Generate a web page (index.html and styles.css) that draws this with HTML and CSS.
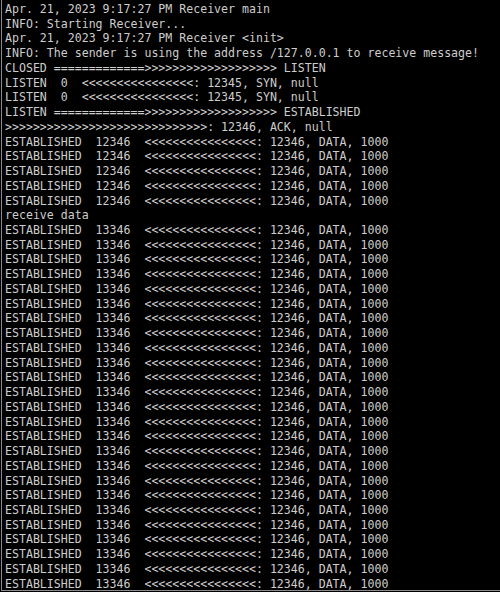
FILE: index.html
```html
<!DOCTYPE html>
<html>
<head>
<meta charset="utf-8">
<link rel="stylesheet" href="styles.css">
</head>
<body>
<div class="frame">
<pre class="console">Apr. 21, 2023 9:17:27 PM Receiver main
INFO: Starting Receiver...
Apr. 21, 2023 9:17:27 PM Receiver &lt;init&gt;
INFO: The sender is using the address /127.0.0.1 to receive message!
CLOSED =============&gt;&gt;&gt;&gt;&gt;&gt;&gt;&gt;&gt;&gt;&gt;&gt;&gt;&gt;&gt;&gt;&gt;&gt;&gt; LISTEN
LISTEN  0  &lt;&lt;&lt;&lt;&lt;&lt;&lt;&lt;&lt;&lt;&lt;&lt;&lt;&lt;&lt;&lt;: 12345, SYN, null
LISTEN  0  &lt;&lt;&lt;&lt;&lt;&lt;&lt;&lt;&lt;&lt;&lt;&lt;&lt;&lt;&lt;&lt;: 12345, SYN, null
LISTEN =============&gt;&gt;&gt;&gt;&gt;&gt;&gt;&gt;&gt;&gt;&gt;&gt;&gt;&gt;&gt;&gt;&gt;&gt;&gt; ESTABLISHED
&gt;&gt;&gt;&gt;&gt;&gt;&gt;&gt;&gt;&gt;&gt;&gt;&gt;&gt;&gt;&gt;&gt;&gt;&gt;&gt;&gt;&gt;&gt;&gt;&gt;&gt;&gt;&gt;&gt;: 12346, ACK, null
ESTABLISHED  12346  &lt;&lt;&lt;&lt;&lt;&lt;&lt;&lt;&lt;&lt;&lt;&lt;&lt;&lt;&lt;&lt;: 12346, DATA, 1000
ESTABLISHED  12346  &lt;&lt;&lt;&lt;&lt;&lt;&lt;&lt;&lt;&lt;&lt;&lt;&lt;&lt;&lt;&lt;: 12346, DATA, 1000
ESTABLISHED  12346  &lt;&lt;&lt;&lt;&lt;&lt;&lt;&lt;&lt;&lt;&lt;&lt;&lt;&lt;&lt;&lt;: 12346, DATA, 1000
ESTABLISHED  12346  &lt;&lt;&lt;&lt;&lt;&lt;&lt;&lt;&lt;&lt;&lt;&lt;&lt;&lt;&lt;&lt;: 12346, DATA, 1000
ESTABLISHED  12346  &lt;&lt;&lt;&lt;&lt;&lt;&lt;&lt;&lt;&lt;&lt;&lt;&lt;&lt;&lt;&lt;: 12346, DATA, 1000
receive data
ESTABLISHED  13346  &lt;&lt;&lt;&lt;&lt;&lt;&lt;&lt;&lt;&lt;&lt;&lt;&lt;&lt;&lt;&lt;: 12346, DATA, 1000
ESTABLISHED  13346  &lt;&lt;&lt;&lt;&lt;&lt;&lt;&lt;&lt;&lt;&lt;&lt;&lt;&lt;&lt;&lt;: 12346, DATA, 1000
ESTABLISHED  13346  &lt;&lt;&lt;&lt;&lt;&lt;&lt;&lt;&lt;&lt;&lt;&lt;&lt;&lt;&lt;&lt;: 12346, DATA, 1000
ESTABLISHED  13346  &lt;&lt;&lt;&lt;&lt;&lt;&lt;&lt;&lt;&lt;&lt;&lt;&lt;&lt;&lt;&lt;: 12346, DATA, 1000
ESTABLISHED  13346  &lt;&lt;&lt;&lt;&lt;&lt;&lt;&lt;&lt;&lt;&lt;&lt;&lt;&lt;&lt;&lt;: 12346, DATA, 1000
ESTABLISHED  13346  &lt;&lt;&lt;&lt;&lt;&lt;&lt;&lt;&lt;&lt;&lt;&lt;&lt;&lt;&lt;&lt;: 12346, DATA, 1000
ESTABLISHED  13346  &lt;&lt;&lt;&lt;&lt;&lt;&lt;&lt;&lt;&lt;&lt;&lt;&lt;&lt;&lt;&lt;: 12346, DATA, 1000
ESTABLISHED  13346  &lt;&lt;&lt;&lt;&lt;&lt;&lt;&lt;&lt;&lt;&lt;&lt;&lt;&lt;&lt;&lt;: 12346, DATA, 1000
ESTABLISHED  13346  &lt;&lt;&lt;&lt;&lt;&lt;&lt;&lt;&lt;&lt;&lt;&lt;&lt;&lt;&lt;&lt;: 12346, DATA, 1000
ESTABLISHED  13346  &lt;&lt;&lt;&lt;&lt;&lt;&lt;&lt;&lt;&lt;&lt;&lt;&lt;&lt;&lt;&lt;: 12346, DATA, 1000
ESTABLISHED  13346  &lt;&lt;&lt;&lt;&lt;&lt;&lt;&lt;&lt;&lt;&lt;&lt;&lt;&lt;&lt;&lt;: 12346, DATA, 1000
ESTABLISHED  13346  &lt;&lt;&lt;&lt;&lt;&lt;&lt;&lt;&lt;&lt;&lt;&lt;&lt;&lt;&lt;&lt;: 12346, DATA, 1000
ESTABLISHED  13346  &lt;&lt;&lt;&lt;&lt;&lt;&lt;&lt;&lt;&lt;&lt;&lt;&lt;&lt;&lt;&lt;: 12346, DATA, 1000
ESTABLISHED  13346  &lt;&lt;&lt;&lt;&lt;&lt;&lt;&lt;&lt;&lt;&lt;&lt;&lt;&lt;&lt;&lt;: 12346, DATA, 1000
ESTABLISHED  13346  &lt;&lt;&lt;&lt;&lt;&lt;&lt;&lt;&lt;&lt;&lt;&lt;&lt;&lt;&lt;&lt;: 12346, DATA, 1000
ESTABLISHED  13346  &lt;&lt;&lt;&lt;&lt;&lt;&lt;&lt;&lt;&lt;&lt;&lt;&lt;&lt;&lt;&lt;: 12346, DATA, 1000
ESTABLISHED  13346  &lt;&lt;&lt;&lt;&lt;&lt;&lt;&lt;&lt;&lt;&lt;&lt;&lt;&lt;&lt;&lt;: 12346, DATA, 1000
ESTABLISHED  13346  &lt;&lt;&lt;&lt;&lt;&lt;&lt;&lt;&lt;&lt;&lt;&lt;&lt;&lt;&lt;&lt;: 12346, DATA, 1000
ESTABLISHED  13346  &lt;&lt;&lt;&lt;&lt;&lt;&lt;&lt;&lt;&lt;&lt;&lt;&lt;&lt;&lt;&lt;: 12346, DATA, 1000
ESTABLISHED  13346  &lt;&lt;&lt;&lt;&lt;&lt;&lt;&lt;&lt;&lt;&lt;&lt;&lt;&lt;&lt;&lt;: 12346, DATA, 1000
ESTABLISHED  13346  &lt;&lt;&lt;&lt;&lt;&lt;&lt;&lt;&lt;&lt;&lt;&lt;&lt;&lt;&lt;&lt;: 12346, DATA, 1000
ESTABLISHED  13346  &lt;&lt;&lt;&lt;&lt;&lt;&lt;&lt;&lt;&lt;&lt;&lt;&lt;&lt;&lt;&lt;: 12346, DATA, 1000
ESTABLISHED  13346  &lt;&lt;&lt;&lt;&lt;&lt;&lt;&lt;&lt;&lt;&lt;&lt;&lt;&lt;&lt;&lt;: 12346, DATA, 1000
ESTABLISHED  13346  &lt;&lt;&lt;&lt;&lt;&lt;&lt;&lt;&lt;&lt;&lt;&lt;&lt;&lt;&lt;&lt;: 12346, DATA, 1000
ESTABLISHED  13346  &lt;&lt;&lt;&lt;&lt;&lt;&lt;&lt;&lt;&lt;&lt;&lt;&lt;&lt;&lt;&lt;: 12346, DATA, 1000</pre>
</div>
</body>
</html>
```

FILE: styles.css
```css
html, body {
  margin: 0;
  padding: 0;
  background: #000;
}

.frame {
  width: 499px;
  height: 590px;
  margin-left: 1px;
  border-left: 1px solid #8a8a8a;
  border-bottom: 1px solid #8a8a8a;
  background: #000;
  overflow: hidden;
}

.console {
  margin: 0;
  padding: 2px 0 0 3px;
  font-family: "DejaVu Sans Mono", monospace;
  font-size: 11.58px;
  line-height: 14.74px;
  color: #cdcdcd;
  white-space: pre;
}
```
